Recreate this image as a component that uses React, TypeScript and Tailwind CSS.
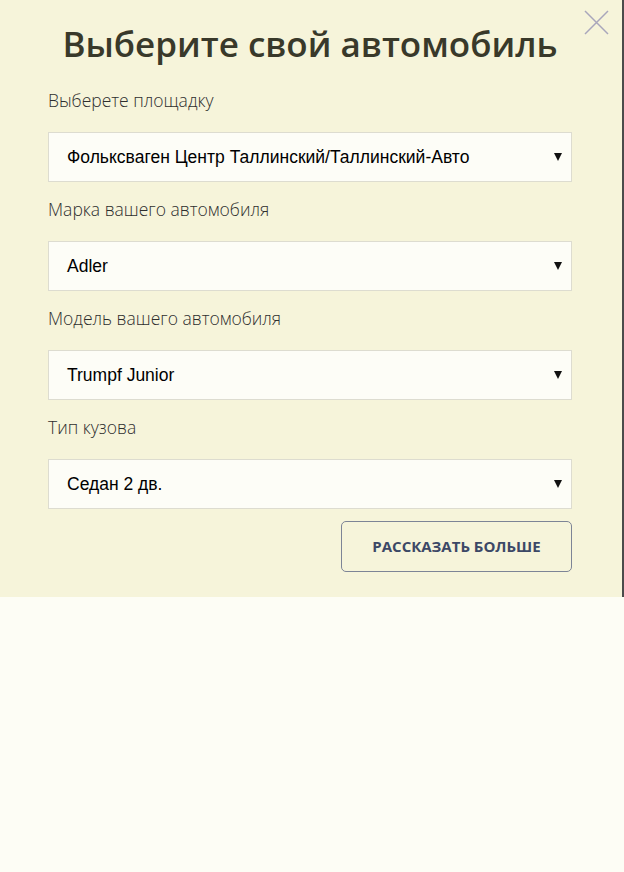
import React from "react";

const fields = [
  { label: "Выберете площадку", value: "Фольксваген Центр Таллинский/Таллинский-Авто" },
  { label: "Марка вашего автомобиля", value: "Adler" },
  { label: "Модель вашего автомобиля", value: "Trumpf Junior" },
  { label: "Тип кузова", value: "Седан 2 дв." },
];

export default function App() {
  return (
    <div className="w-[624px] h-[872px] bg-[#fdfdf5] overflow-hidden">
      <div className="relative bg-[#f6f4da] border-r-2 border-[#4b4b4b] pt-6 pl-[48px] pr-[50px] pb-[25px]" style={{ fontFamily: '"Open Sans", sans-serif' }}>
        <button className="absolute right-[13px] top-[10px] w-[25px] h-[25px]" aria-label="close">
          <svg viewBox="0 0 25 25" width="25" height="25">
            <path d="M1 1 L24 24 M24 1 L1 24" stroke="#a9a6bb" strokeWidth="1.5" fill="none" />
          </svg>
        </button>
        <h1 className="text-center text-[35px] leading-[40px] font-semibold text-[#39392a] mb-6">
          Выберите свой автомобиль
        </h1>
        <div className="flex flex-col">
          {fields.map((f, i) => (
            <div key={i} className={i < fields.length - 1 ? "mb-[15px]" : ""}>
              <div className="text-[17.5px] leading-[24px] font-light text-[#2e2e2e] mb-5">{f.label}</div>
              <div className="h-[50px] bg-[#fdfdf7] border border-[#dddcd0] flex items-center justify-between pl-[18px] pr-[9px]">
                <span className="text-[17.5px] text-black" style={{ fontFamily: '"Liberation Sans", Arial, sans-serif' }}>{f.value}</span>
                <svg width="8" height="8" viewBox="0 0 8 8"><path d="M0 0 L8 0 L4 8 Z" fill="#111" /></svg>
              </div>
            </div>
          ))}
        </div>
        <div className="flex justify-end mt-3">
          <button className="w-[231px] h-[51px] border border-[#7d8496] rounded-[5px] text-[15px] font-bold uppercase text-[#3c4866] bg-transparent">
            Рассказать больше
          </button>
        </div>
      </div>
    </div>
  );
}
